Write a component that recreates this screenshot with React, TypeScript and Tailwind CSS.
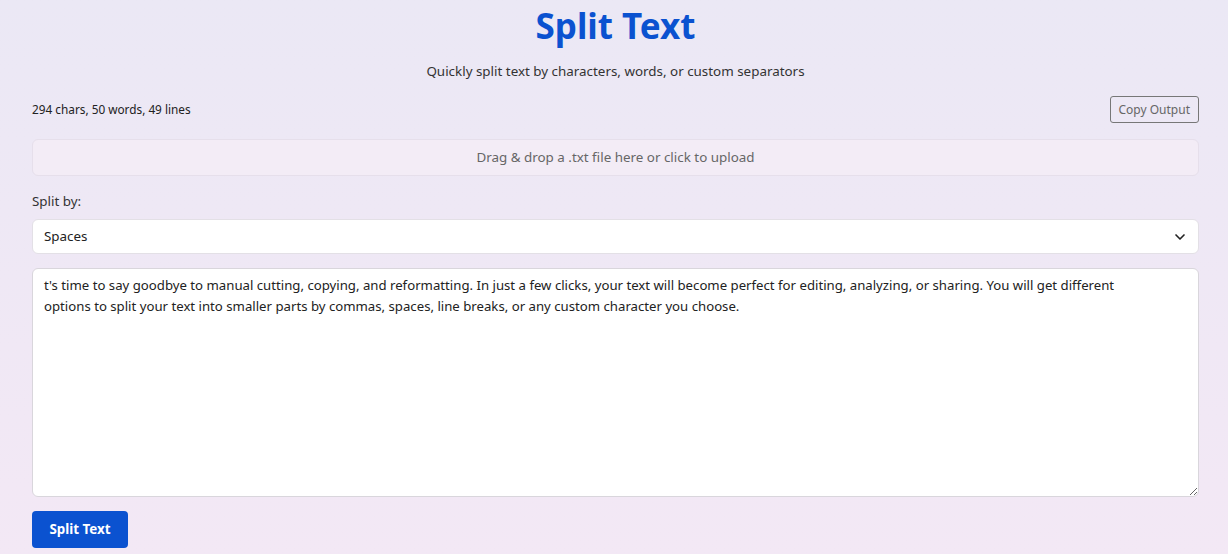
import { ChevronDown } from "lucide-react";

const sample =
  "t's time to say goodbye to manual cutting, copying, and reformatting. In just a few clicks, your text will become perfect for editing, analyzing, or sharing. You will get different options to split your text into smaller parts by commas, spaces, line breaks, or any custom character you choose.";

export default function App() {
  return (
    <div
      className="min-h-[554px] w-full bg-gradient-to-b from-[#ebe8f5] to-[#f3e8f5] pl-8 pr-[29px] pt-[4px] pb-2 text-[#222]"
      style={{ fontFamily: '"Noto Sans", "Open Sans", sans-serif' }}
    >
      {/* heading */}
      <h1 className="text-center text-[35px] font-bold leading-[44px] text-[#0b52d0]">Split Text</h1>
      <p className="mt-[13px] text-center text-[13.4px] leading-[20px] text-[#333]">
        Quickly split text by characters, words, or custom separators
      </p>

      {/* stats + copy */}
      <div className="mt-[15px] flex items-center justify-between">
        <span className="text-[11.8px] text-[#222]">294 chars, 50 words, 49 lines</span>
        <button className="rounded-[3px] border border-[#777] px-[8px] py-[4px] text-[12px] leading-[17px] text-[#666]">
          Copy Output
        </button>
      </div>

      {/* upload */}
      <div className="mt-[16px] flex h-[37px] items-center justify-center rounded-md border border-[#e6dfeb] bg-[#f3ecf6] text-[13.4px] text-[#666]">
        Drag &amp; drop a .txt file here or click to upload
      </div>

      <label className="mt-[15px] block text-[13.4px] leading-[20px] text-[#333]">Split by:</label>

      <div className="relative mt-[8px] flex h-[35px] items-center rounded-md border border-[#e3e0e6] bg-white px-[11px] text-[13.4px] text-[#222]">
        Spaces
        <ChevronDown className="absolute right-[10px] top-[9px] h-4 w-4 text-[#222]" strokeWidth={2.5} />
      </div>

      <textarea
        className="mt-[14px] block h-[229px] w-full resize-y rounded-md border border-[#d9d6dc] bg-white pl-[11px] pr-[60px] py-[6px] text-[13.2px] leading-[21px] text-[#222] outline-none"
        defaultValue={sample}
      />

      <button className="mt-[14px] h-[37px] w-[96px] rounded-[4px] bg-[#0b52d0] text-[13.4px] font-bold text-white">
        Split Text
      </button>
    </div>
  );
}
